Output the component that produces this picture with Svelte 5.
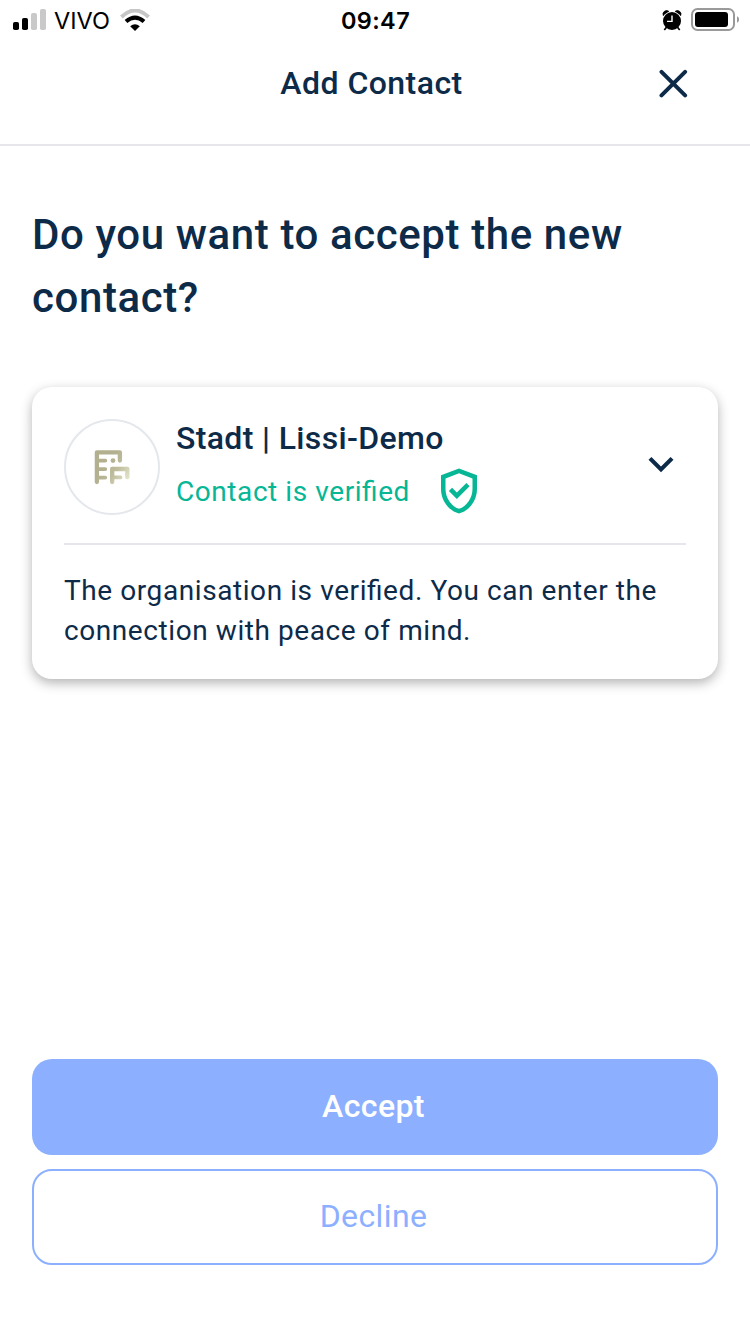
<script>
  const bars = [
    { x: 0, h: 8, on: true },
    { x: 9, h: 12, on: true },
    { x: 18, h: 17, on: false },
    { x: 27, h: 21, on: false }
  ];
</script>

<div class="screen">
  <div class="status">
    <div class="carrier">
      <svg class="signal" width="33" height="21" viewBox="0 0 33 21">
        {#each bars as b}
          <rect x={b.x} y={21 - b.h} width="6" height={b.h} rx="1.8" fill={b.on ? '#000' : '#c9c9c9'} />
        {/each}
      </svg>
      <span class="network">VIVO</span>
      <svg class="wifi" width="30" height="23" viewBox="0 0 30 23" fill="none">
        <path d="M1.4 8Q15 -5 28.6 8" stroke="#c6c6c6" stroke-width="4" />
        <path d="M6 12.6Q15 4.6 24 12.6" stroke="#000" stroke-width="4" />
        <path d="M10.2 17.2Q15 13.2 19.8 17.2L15 22Z" fill="#000" />
      </svg>
    </div>
    <span class="time">09:47</span>
    <div class="power">
      <svg width="20" height="21" viewBox="0 0 20 21">
        <path d="M1.3 5.6A3.6 3.6 0 0 1 6.9 1.4Z M18.7 5.6A3.6 3.6 0 0 0 13.1 1.4Z" fill="#000" stroke="#000" stroke-width=".8" />
        <circle cx="10" cy="11" r="9.7" fill="#fff" />
        <circle cx="10" cy="11" r="9" fill="#000" />
        <path d="M4.7 17L2.3 20M15.3 17L17.7 20" stroke="#000" stroke-width="1.7" />
        <path d="M10 5.5V11.4H5" stroke="#fff" stroke-width="1.4" fill="none" />
      </svg>
      <svg width="48" height="24" viewBox="0 0 48 24">
        <rect x="1" y="1" width="42" height="21" rx="5.5" fill="none" stroke="#9a9a9a" stroke-width="2" />
        <rect x="4" y="4" width="33" height="15" rx="3" fill="#000" />
        <path d="M46 8.2Q48.2 9 48 11.5Q48.2 14 46 14.8Z" fill="#9a9a9a" />
      </svg>
    </div>
  </div>

  <header>
    <span></span>
    <h1>Add Contact</h1>
    <button class="close" aria-label="Close">
      <svg width="30" height="30" viewBox="0 0 30 30">
        <path d="M2.5 2.8L26.1 26.4M26.1 2.8L2.5 26.4" stroke="#0d2b49" stroke-width="4" stroke-linecap="round" />
      </svg>
    </button>
  </header>

  <main>
    <h2>Do you want to accept the new contact?</h2>

    <section class="card">
      <div class="summary">
        <div class="avatar">
          <svg width="36" height="35" viewBox="0 0 36 35" fill="none">
            <defs>
              <linearGradient id="sand" gradientUnits="userSpaceOnUse" x1="14" y1="12" x2="36" y2="28">
                <stop offset="0" stop-color="#b3b090" />
                <stop offset=".45" stop-color="#bfbd9d" />
                <stop offset="1" stop-color="#e5e8ce" />
              </linearGradient>
            </defs>
            <g stroke="url(#sand)" stroke-width="4.3" stroke-linecap="round" stroke-linejoin="round">
              <path d="M2.9 32V2.4H25.9V10.5" />
              <path d="M18.2 32V19H33.4V27.2" />
              <path stroke-width="3.8" d="M2.9 10.6H11.3M2.9 19.1H11.3M2.9 27.6H11.3M18.2 27.4H26.5" />
            </g>
            <circle cx="19" cy="10.6" r="2.4" fill="#b5b292" />
          </svg>
        </div>
        <div class="who">
          <h3>Stadt | Lissi-Demo</h3>
          <div class="verified">
            <span>Contact is verified</span>
            <svg width="54" height="54" viewBox="0 0 24 24" fill="#06b695">
              <path d="M12 2L4 5v6.09c0 5.05 3.41 9.76 8 10.91 4.59-1.15 8-5.86 8-10.91V5l-8-3zm6 9.09c0 4-2.55 7.7-6 8.83-3.45-1.13-6-4.82-6-8.83v-4.7l6-2.25 6 2.25v4.7z" />
              <path d="M8.91 10.55L7.5 11.96l3.54 3.54 5.66-5.66-1.41-1.41-4.25 4.24z" />
            </svg>
          </div>
        </div>
        <svg class="chevron" width="50" height="50" viewBox="0 0 24 24" fill="#0d2b49">
          <path d="M7.41 8.59L12 13.17l4.59-4.58L18 10l-6 6-6-6z" />
        </svg>
      </div>
      <p>The organisation is verified. You can enter the connection with peace of mind.</p>
    </section>
  </main>

  <footer>
    <button class="accept">Accept</button>
    <button class="decline">Decline</button>
  </footer>
</div>

<style>
  :global(body) { margin: 0; background: #fff; }
  .screen {
    box-sizing: border-box;
    width: 750px;
    height: 1334px;
    display: flex;
    flex-direction: column;
    overflow: hidden;
    background: #fff;
    color: #0d2b49;
    font-family: Roboto, sans-serif;
    font-feature-settings: "liga" 1;
  }
  h1, h2, h3, p { margin: 0; font-weight: 500; }
  svg { display: block; flex: none; }
  button { font: inherit; padding: 0; border: 0; background: none; box-sizing: border-box; }
  .status {
    height: 40px;
    box-sizing: border-box;
    padding: 0 11px 0 13px;
    display: grid;
    grid-template-columns: 1fr auto 1fr;
    align-items: center;
    color: #000;
    font-family: Inter, sans-serif;
  }
  .carrier { display: flex; align-items: center; }
  .signal { margin-bottom: 2px; }
  .network { font-size: 23.5px; margin-left: 8px; line-height: 40px; padding-top: 1px; }
  .wifi { margin-left: 10px; }
  .time { font-size: 23.5px; font-weight: 600; line-height: 40px; letter-spacing: .4px; padding-top: 1px; margin-right: 1px; }
  .power { display: flex; justify-content: flex-end; align-items: center; gap: 9px; margin-bottom: 1px; }
  header {
    height: 106px;
    box-sizing: border-box;
    padding: 28px 61px 0;
    border-bottom: 2px solid #e6e6eb;
    display: grid;
    grid-template-columns: 1fr auto 1fr;
    align-items: start;
  }
  h1 { font-size: 32px; line-height: 30px; letter-spacing: .45px; margin-right: 7px; }
  .close { justify-self: end; height: 30px; width: 30px; margin-top: 1px; }
  main { padding: 57px 32px 0; flex: 1; }
  h2 { font-size: 42px; line-height: 63px; letter-spacing: .6px; }
  .card {
    margin-top: 58px;
    height: 292px;
    box-sizing: border-box;
    padding: 32px;
    border-radius: 20px;
    background: #fff;
    box-shadow: 0 4px 12px rgba(0, 0, 0, .3);
  }
  .summary {
    height: 126px;
    box-sizing: border-box;
    border-bottom: 2px solid #e6e6eb;
    display: flex;
  }
  .avatar {
    width: 96px;
    height: 96px;
    box-sizing: border-box;
    border: 2px solid #e4e7eb;
    border-radius: 50%;
    display: flex;
    align-items: center;
    justify-content: center;
  }
  .who { flex: 1; padding-left: 16px; }
  h3 { font-size: 32px; line-height: 38px; letter-spacing: .36px; }
  .verified { display: flex; align-items: center; margin-top: 6.5px; gap: 22px; color: #06b695; font-size: 28px; letter-spacing: .57px; }
  .verified span { padding-top: 1px; }
  .chevron { margin: 20px 0 0; }
  p { margin-top: 26px; font-size: 28px; line-height: 40px; font-weight: 400; letter-spacing: .58px; }
  footer { padding: 0 32px 69px; display: flex; flex-direction: column; gap: 14px; }
  footer button { height: 96px; border-radius: 20px; font-size: 32px; letter-spacing: .4px; padding: 0 3px 2px 0; }
  .accept { background: #8cb0ff; color: #fff; font-weight: 500; }
  .decline { border: 2px solid #8cb0ff; color: #8cb0ff; }
</style>
